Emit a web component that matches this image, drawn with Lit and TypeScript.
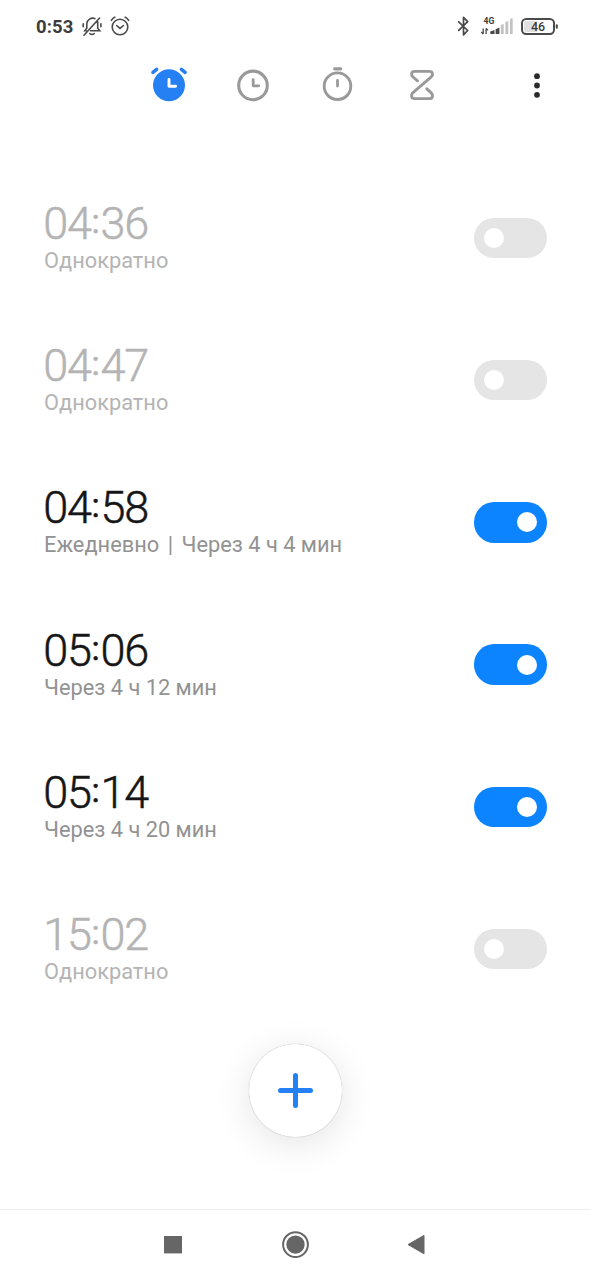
import { LitElement, html, css, nothing } from "lit";
import { customElement, property } from "lit/decorators.js";
import { classMap } from "lit/directives/class-map.js";

interface Alarm {
  hours: string;
  minutes: string;
  repeat?: string;
  remaining?: string;
  on: boolean;
}

const alarms: Alarm[] = [
  { hours: "04", minutes: "36", repeat: "Однократно", on: false },
  { hours: "04", minutes: "47", repeat: "Однократно", on: false },
  { hours: "04", minutes: "58", repeat: "Ежедневно", remaining: "Через 4 ч 4 мин", on: true },
  { hours: "05", minutes: "06", remaining: "Через 4 ч 12 мин", on: true },
  { hours: "05", minutes: "14", remaining: "Через 4 ч 20 мин", on: true },
  { hours: "15", minutes: "02", repeat: "Однократно", on: false },
];

@customElement("status-bar")
class StatusBar extends LitElement {
  static styles = css`
    :host { display: flex; height: 52px; padding: 0 32px 0 36px; box-sizing: border-box; align-items: center; justify-content: space-between; color: #3c3c3c; }
    .group { display: flex; align-items: center; height: 52px; }
    .clock { font-size: 18.5px; line-height: 52px; font-weight: 700; letter-spacing: 0.1px; width: 46px; padding-top: 1px; white-space: nowrap; }
    svg { display: block; overflow: visible; }
    text { font-family: Roboto, sans-serif; fill: #3c3c3c; }
    .net { font-size: 8.6px; font-weight: 700; }
    .level { font-size: 12.5px; font-weight: 500; }
  `;
  render() {
    return html`
      <div class="group">
        <div class="clock">0:53</div>
        <svg width="50" height="52" fill="none" stroke="#4a4a4a" stroke-width="1.6" stroke-linecap="round">
          <path d="M4.2 30.8h-1.4l2-2.6v-4.5a5.8 5.8 0 0 1 8-5.1M15.7 21.8v6.4l2.1 2.6H8.6M2 35.2L17.6 18M7.8 33.7q2.2 1.6 4.4 0M1.2 23.8v3M18.9 23.8v3" />
          <circle cx="38" cy="27" r="7.8" />
          <path d="M34.7 25.5l3.3 2.9 3.4-2.9M29.4 20.3q1.1-2.2 3.4-3.1M46.6 20.3q-1.1-2.2-3.4-3.1" />
        </svg>
      </div>
      <div class="group">
        <svg width="103" height="52">
          <path d="M2.7 21.9l9 8.6-4.2 4.4V17.3l4.2 4.4-9 8.7" fill="none" stroke="#484848" stroke-width="1.7" stroke-linejoin="round" stroke-linecap="round" />
          <text class="net" x="27.5" y="23.6">4G</text>
          <path d="M27.2 28.5v5.3M25.4 32l1.8 2M30.1 34v-5.6M30.1 28.4l1.8 1.8" fill="none" stroke="#484848" stroke-width="1.3" />
          <path d="M34.3 34v-2.6l4.2-1.4v4zM39.6 34v-4.8l3.8-1.8V34z" fill="#484848" />
          <path d="M44.8 34v-9l2.9-.9V34zM49.4 34V22l2.9-.9V34zM54 34V19l2.7-.9V34z" fill="#c3c3c3" />
          <rect x="66" y="18.9" width="32" height="15" rx="4.2" fill="#fff" stroke="#4b4b4b" stroke-width="2" />
          <path d="M70.5 21H81v11H70.5Q68 32 68 29.5v-6Q68 21 70.5 21z" fill="#e0e0e0" />
          <rect x="99.8" y="24.3" width="2" height="4.5" rx="1" fill="#4b4b4b" />
          <text class="level" x="82" y="31" text-anchor="middle">46</text>
        </svg>
      </div>
    `;
  }
}

@customElement("tab-bar")
class TabBar extends LitElement {
  static styles = css`
    :host { display: flex; height: 66px; box-sizing: border-box; padding-left: 127px; }
    .tab { width: 84.2px; height: 66px; flex: none; }
    .more { width: 20px; height: 66px; margin-left: 63.4px; }
    svg { display: block; margin: 0 auto; overflow: visible; }
  `;
  render() {
    const grey = "#999";
    return html`
      <div class="tab">
        <svg width="40" height="66">
          <circle cx="20" cy="33.3" r="16" fill="#2581f3" />
          <path d="M3.9 20.4l3.7-3.1M36.1 20.4l-3.7-3.1" stroke="#2581f3" stroke-width="3.5" stroke-linecap="round" />
          <path d="M20 27.5v6.8h6.6" fill="none" stroke="#fff" stroke-width="2.9" stroke-linecap="round" stroke-linejoin="round" />
        </svg>
      </div>
      <div class="tab">
        <svg width="40" height="66" fill="none" stroke=${grey}>
          <circle cx="20" cy="33.4" r="14.3" stroke-width="3.1" />
          <path d="M20.2 27.6v6.2h5.5" stroke-width="2.8" stroke-linecap="round" stroke-linejoin="round" />
        </svg>
      </div>
      <div class="tab">
        <svg width="40" height="66" fill="none" stroke=${grey} stroke-linecap="round">
          <circle cx="20.5" cy="34.2" r="13.3" stroke-width="2.9" />
          <path d="M17.7 16.8h6" stroke-width="3.3" />
          <path d="M20.5 28.4v5.7" stroke-width="2.8" />
        </svg>
      </div>
      <div class="tab">
        <svg width="40" height="66" fill="none" stroke=${grey} stroke-width="2.9" stroke-linecap="round" stroke-linejoin="round">
          <path d="M15.5 28.8L11 25C8.7 22.7 9.2 19.4 12.5 19.4H27.5C31.2 19.4 31.2 23.4 29 25.1L11 40.6C8.8 43 9 46.6 12.5 46.6H27.5C31.2 46.6 31.2 42.8 29 40.6L24.8 36.8" />
        </svg>
      </div>
      <div class="more">
        <svg width="20" height="66" fill="#2b2b2b">
          <circle cx="10" cy="24.2" r="2.9" /><circle cx="10" cy="33.5" r="2.9" /><circle cx="10" cy="42.8" r="2.9" />
        </svg>
      </div>
    `;
  }
}

@customElement("alarm-row")
class AlarmRow extends LitElement {
  @property({ attribute: false }) alarm!: Alarm;
  static styles = css`
    :host { display: flex; height: 142.2px; box-sizing: border-box; padding: 0 44px; align-items: center; justify-content: space-between; }
    .info { color: #b4b4b4; padding-bottom: 3px; }
    .time { display: flex; font-size: 45px; line-height: 50px; height: 49px; font-weight: 300; letter-spacing: -1.2px; margin-left: -0.7px; -webkit-text-stroke: 0.5px currentColor; }
    .pair { width: 47.3px; }
    .colon { width: 10px; font-size: 34px; font-weight: 400; line-height: 45px; letter-spacing: 0; text-align: center; }
    .note { display: flex; font-size: 21.8px; line-height: 26px; white-space: pre; }
    .bar { margin: 0 8.5px; }
    .on .time { color: #161616; }
    .on .note { color: #929292; }
    .switch { width: 73.4px; height: 40.4px; border-radius: 20.2px; background: #e5e5e5; box-sizing: border-box; padding: 0 10px; display: flex; align-items: center; }
    .switch.active { background: #0d84ff; justify-content: flex-end; }
    .knob { width: 20px; height: 20px; border-radius: 50%; background: #fff; }
  `;
  render() {
    const a = this.alarm;
    return html`
      <div class=${classMap({ info: true, on: a.on })}>
        <div class="time"><span class="pair">${a.hours}</span><span class="colon">:</span><span class="pair">${a.minutes}</span></div>
        <div class="note">
          ${a.repeat ? html`<span>${a.repeat}</span>` : nothing}
          ${a.repeat && a.remaining ? html`<span class="bar">|</span>` : nothing}
          ${a.remaining ? html`<span>${a.remaining}</span>` : nothing}
        </div>
      </div>
      <div class=${classMap({ switch: true, active: a.on })}><div class="knob"></div></div>
    `;
  }
}

@customElement("nav-bar")
class NavBar extends LitElement {
  static styles = css`
    :host { display: block; height: 71px; box-sizing: border-box; border-top: 1px solid #efefef; }
    svg { display: block; }
  `;
  render() {
    return html`<svg width="591" height="70" fill="#666">
      <rect x="164" y="26" width="18" height="17.4" />
      <circle cx="295.5" cy="34.6" r="12.4" fill="none" stroke="#666" stroke-width="2" />
      <circle cx="295.5" cy="34.6" r="9.2" />
      <path d="M424 25.4v18.4L408 34.6z" stroke="#666" stroke-width="1" stroke-linejoin="round" />
    </svg>`;
  }
}

@customElement("app-root")
class AppRoot extends LitElement {
  static styles = css`
    :host { display: flex; flex-direction: column; width: 591px; height: 1280px; background: #fff; font-family: Roboto, sans-serif; overflow: hidden; }
    .list { padding-top: 49px; flex: 1; min-height: 0; }
    .add { width: 93px; height: 93px; margin: 24px auto 0; border-radius: 50%; background: #fff; box-shadow: 0 0 1px rgba(0,0,0,.35), 0 7px 36px rgba(0,0,0,.11); display: flex; align-items: center; justify-content: center; }
  `;
  render() {
    return html`
      <status-bar></status-bar>
      <tab-bar></tab-bar>
      <div class="list">
        ${alarms.map((a) => html`<alarm-row .alarm=${a}></alarm-row>`)}
        <div class="add">
          <svg width="40" height="40" stroke="#2581f3" stroke-width="5" stroke-linecap="round"><path d="M19.5 4.5v30M4.5 19.5h30" /></svg>
        </div>
      </div>
      <nav-bar></nav-bar>
    `;
  }
}
